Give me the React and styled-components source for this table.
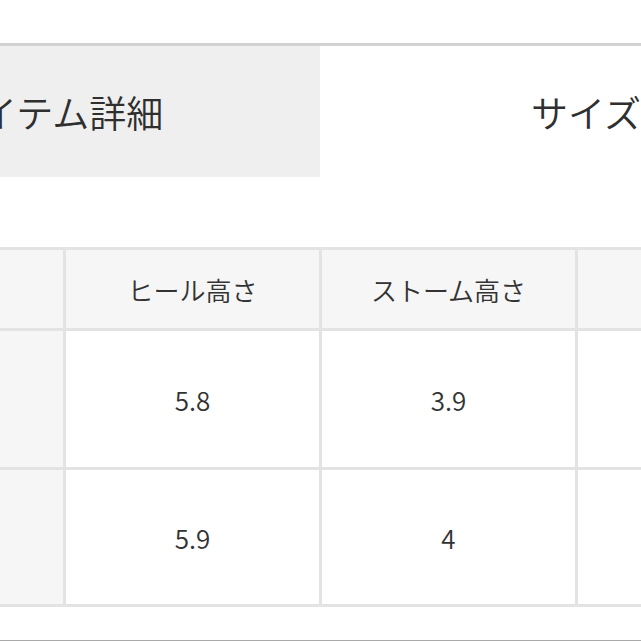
import React from 'react';
import styled, { createGlobalStyle } from 'styled-components';

const GlobalStyle = createGlobalStyle`
  html, body {
    margin: 0;
    padding: 0;
    background: #fff;
  }

  body {
    font-family: 'Noto Sans CJK JP', 'Noto Sans', sans-serif;
    font-weight: 350;
    color: #333;
    overflow: hidden;
  }
`;

const Page = styled.div`
  width: 641px;
  height: 641px;
  overflow: hidden;
  background: #fff;
`;

// the screenshot is a crop of a wider page, so the content is shifted left
const Inner = styled.div`
  width: 1100px;
  margin-left: -212px;
  padding-top: 43px;
`;

const TabBar = styled.div`
  display: flex;
  border-top: 3px solid #d2d2d2;
`;

const Tab = styled.div`
  width: 532px;
  height: 131px;
  display: flex;
  align-items: center;
  justify-content: center;
  font-size: 37px;
  color: #2f2f2f;
  background: ${(p) => (p.$active ? '#efefef' : '#fff')};
`;

const Table = styled.div`
  display: grid;
  grid-template-columns: repeat(4, 253px);
  grid-template-rows: 78px 136px 134px;
  gap: 3px;
  padding: 3px;
  width: max-content;
  margin: 70px 0 0 19px;
  background: #e3e3e3;
`;

const Cell = styled.div`
  display: flex;
  align-items: center;
  justify-content: center;
  font-size: 26px;
  color: #333;
  background: ${(p) => (p.$head ? '#f6f6f6' : '#fff')};
`;

const Footer = styled.div`
  margin-top: 33px;
  border-top: 2px solid #a9a9a9;
`;

const columns = ['サイズ', 'ヒール高さ', 'ストーム高さ', '足囲'];
const rows = [
  ['22.5', '5.8', '3.9', ''],
  ['23.0', '5.9', '4', ''],
];

function App() {
  return (
    <Page>
      <GlobalStyle />
      <Inner>
        <TabBar>
          <Tab $active>アイテム詳細</Tab>
          <Tab>サイズ</Tab>
        </TabBar>

        <Table>
          {columns.map((c) => (
            <Cell key={c} $head>
              {c}
            </Cell>
          ))}
          {rows.map((r, i) =>
            r.map((v, j) => (
              <Cell key={`${i}-${j}`} $head={j === 0}>
                {v}
              </Cell>
            ))
          )}
        </Table>

        <Footer />
      </Inner>
    </Page>
  );
}

export default App;
